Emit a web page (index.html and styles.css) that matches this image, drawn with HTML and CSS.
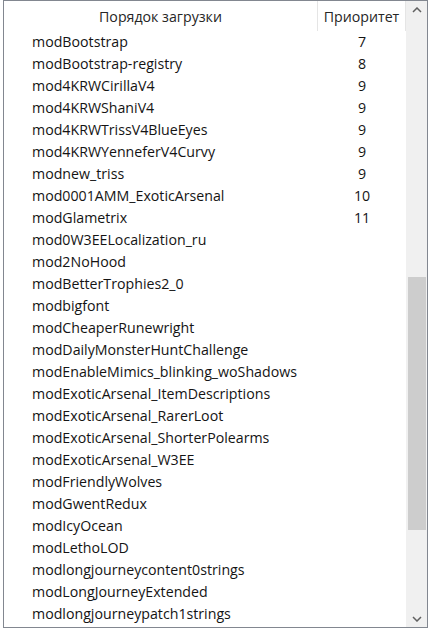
FILE: index.html
```html
<!DOCTYPE html>
<html lang="ru">
<head>
    <meta charset="UTF-8">
    <meta name="viewport" content="width=device-width, initial-scale=1.0">
    <title>Порядок загрузки</title>
    <link rel="stylesheet" href="styles.css">
</head>
<body>
   <div class="box">
       <div class="table">
           <!--шапка-->
           <div class="head">
               <span class="col-name">Порядок загрузки</span>
               <span class="col-prio">Приоритет</span>
           </div>
           <!--список модов-->
           <ul class="list">
               <li><span class="col-name">modBootstrap</span><span class="col-prio">7</span></li>
               <li><span class="col-name">modBootstrap-registry</span><span class="col-prio">8</span></li>
               <li><span class="col-name">mod4KRWCirillaV4</span><span class="col-prio">9</span></li>
               <li><span class="col-name">mod4KRWShaniV4</span><span class="col-prio">9</span></li>
               <li><span class="col-name">mod4KRWTrissV4BlueEyes</span><span class="col-prio">9</span></li>
               <li><span class="col-name">mod4KRWYenneferV4Curvy</span><span class="col-prio">9</span></li>
               <li><span class="col-name">modnew_triss</span><span class="col-prio">9</span></li>
               <li><span class="col-name">mod0001AMM_ExoticArsenal</span><span class="col-prio">10</span></li>
               <li><span class="col-name">modGlametrix</span><span class="col-prio">11</span></li>
               <li><span class="col-name">mod0W3EELocalization_ru</span><span class="col-prio"></span></li>
               <li><span class="col-name">mod2NoHood</span><span class="col-prio"></span></li>
               <li><span class="col-name">modBetterTrophies2_0</span><span class="col-prio"></span></li>
               <li><span class="col-name">modbigfont</span><span class="col-prio"></span></li>
               <li><span class="col-name">modCheaperRunewright</span><span class="col-prio"></span></li>
               <li><span class="col-name">modDailyMonsterHuntChallenge</span><span class="col-prio"></span></li>
               <li><span class="col-name">modEnableMimics_blinking_woShadows</span><span class="col-prio"></span></li>
               <li><span class="col-name">modExoticArsenal_ItemDescriptions</span><span class="col-prio"></span></li>
               <li><span class="col-name">modExoticArsenal_RarerLoot</span><span class="col-prio"></span></li>
               <li><span class="col-name">modExoticArsenal_ShorterPolearms</span><span class="col-prio"></span></li>
               <li><span class="col-name">modExoticArsenal_W3EE</span><span class="col-prio"></span></li>
               <li><span class="col-name">modFriendlyWolves</span><span class="col-prio"></span></li>
               <li><span class="col-name">modGwentRedux</span><span class="col-prio"></span></li>
               <li><span class="col-name">modIcyOcean</span><span class="col-prio"></span></li>
               <li><span class="col-name">modLethoLOD</span><span class="col-prio"></span></li>
               <li><span class="col-name">modlongjourneycontent0strings</span><span class="col-prio"></span></li>
               <li><span class="col-name">modLongJourneyExtended</span><span class="col-prio"></span></li>
               <li><span class="col-name">modlongjourneypatch1strings</span><span class="col-prio"></span></li>
           </ul>
       </div>
       <!--полоса прокрутки-->
       <div class="scroll">
           <span class="arrow">
               <svg width="10" height="6" viewBox="0 0 10 6"><path d="M1 5 L5 1 L9 5" fill="none" stroke="#606060" stroke-width="1.5"/></svg>
           </span>
           <div class="track">
               <span class="thumb"></span>
           </div>
           <span class="arrow">
               <svg width="10" height="6" viewBox="0 0 10 6"><path d="M1 1 L5 5 L9 1" fill="none" stroke="#606060" stroke-width="1.5"/></svg>
           </span>
       </div>
   </div>
</body>
</html>
```

FILE: styles.css
```css
*{
    margin: 0;
    padding: 0;
    list-style: none;
    box-sizing: border-box;
}

body{
    background-color: #fff;
    font-family: "Open Sans", "Noto Sans", sans-serif;
    font-size: 14.2px;
    color: #141414;
}

.box{
    width: 425px;
    height: 628px;
    margin-left: 3px;
    border: 1px solid #828790;
    display: flex;
    overflow: hidden;
}

.table{
    flex: 1;
    overflow: hidden;
}

.head{
    height: 30px;
    display: flex;
    color: #262626;
}

.head span{
    display: flex;
    justify-content: center;
    align-items: center;
    border-right: 1px solid #e5e5e5;
}

.col-name{
    width: 314px;
}

.col-prio{
    width: 88px;
    text-align: center;
}

.list li{
    height: 22px;
    line-height: 22px;
    display: flex;
    white-space: nowrap;
}

.list .col-name{
    padding-left: 28px;
}

.scroll{
    width: 21px;
    background-color: #f0f0f0;
    display: flex;
    flex-direction: column;
}

.arrow{
    height: 17px;
    display: flex;
    justify-content: center;
    align-items: center;
}

.track{
    flex: 1;
    padding: 259px 1px 0 2px;
}

.thumb{
    display: block;
    height: 253px;
    background-color: #cdcdcd;
}
```
